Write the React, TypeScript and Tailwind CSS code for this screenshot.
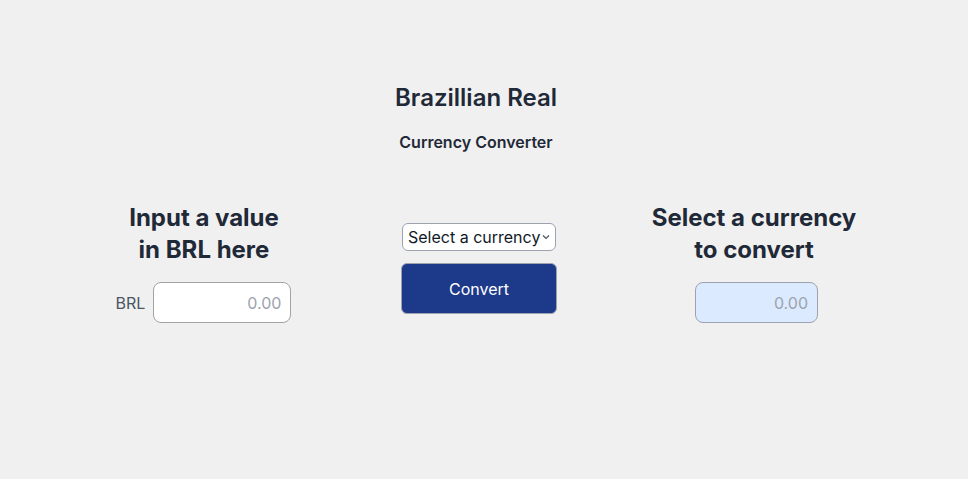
import React from "react";

export default function App() {
  return (
    <div
      className="min-h-screen w-full bg-[#f0f0f0] text-[#1f2937]"
      style={{ fontFamily: "Inter, 'Noto Sans', sans-serif" }}
    >
      <div className="w-[952px] flex flex-col items-center pt-[82px]">
        <h1 className="text-[24px] leading-[32px] font-semibold">Brazillian Real</h1>
        <h2 className="mt-[18px] text-[16px] leading-[20px] font-semibold">Currency Converter</h2>
      </div>
      <div className="w-[958px] flex justify-center mt-[50px]">
        <div className="w-[275px] flex flex-col items-center">
          <h3 className="text-[24px] leading-[32px] font-bold text-center">
            Input a value
            <br />
            in BRL here
          </h3>
          <div className="mt-[16px] flex items-center gap-[8px] mr-[1px]">
            <span className="text-[16px] text-[#4b5563]">BRL</span>
            <input
              type="text"
              placeholder="0.00"
              className="w-[138px] h-[41px] bg-white border border-[#a3a3a3] rounded-lg px-[9px] text-right text-[16px] placeholder:text-[#9ca3af] outline-none"
            />
          </div>
        </div>
        <div className="w-[275px] flex flex-col items-center pt-[21px]">
          <div className="relative w-[154px] h-[28px]">
            <select className="appearance-none w-full h-full bg-white border border-[#9ca3af] rounded-md pl-[5px] pr-[12px] text-[16px] text-[#111827] outline-none">
              <option>Select a currency</option>
            </select>
            <svg
              className="absolute right-[6px] top-[11px] pointer-events-none"
              width="8"
              height="6"
              viewBox="0 0 8 6"
              fill="none"
            >
              <path d="M1 1.5 L4 4.5 L7 1.5" stroke="#4b5563" strokeWidth="1.2" />
            </svg>
          </div>
          <button className="mt-[12px] w-[156px] h-[51px] bg-[#1d398a] text-white rounded-md border border-[#9ca3af] text-[16px] font-normal">
            Convert
          </button>
        </div>
        <div className="w-[275px] flex flex-col items-center">
          <h3 className="text-[24px] leading-[32px] font-bold text-center">
            Select a currency
            <br />
            to convert
          </h3>
          <input
            type="text"
            disabled
            placeholder="0.00"
            className="mt-[16px] ml-[5px] w-[123px] h-[41px] bg-[#dbeafe] border border-[#9ca3af] rounded-lg px-[9px] text-right text-[16px] placeholder:text-[#9ca3af] outline-none"
          />
        </div>
      </div>
    </div>
  );
}
